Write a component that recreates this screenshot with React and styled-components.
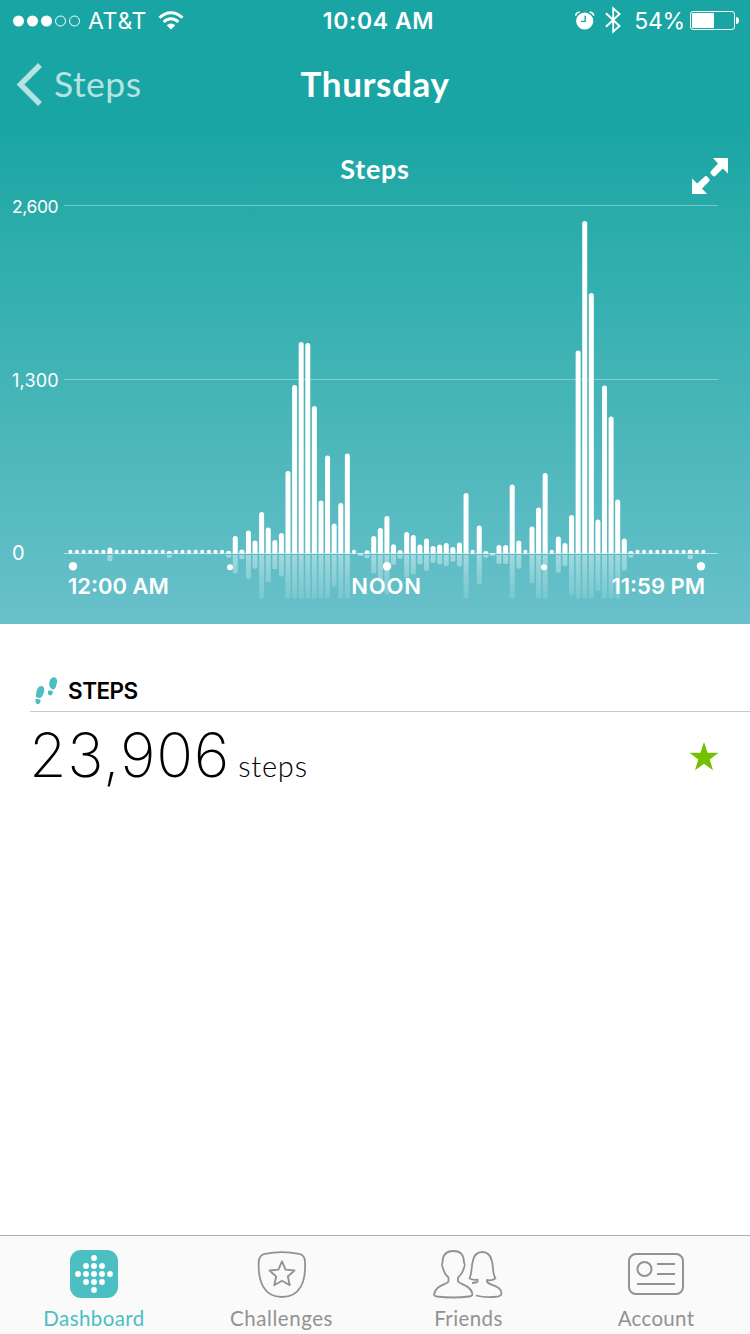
import React from 'react';
import styled, { createGlobalStyle } from 'styled-components';

const GlobalStyle = createGlobalStyle`
  *, *::before, *::after { box-sizing: border-box; }
  body { margin: 0; background: #fff; }
  svg { display: block; flex: none; }
`;

const Screen = styled.div`
  width: 750px;
  height: 1334px;
  display: flex;
  flex-direction: column;
  overflow: hidden;
  background: #fff;
  font-family: Lato, 'Open Sans', sans-serif;
`;

const Hero = styled.section`
  height: 624px;
  flex: none;
  color: #fff;
  background: linear-gradient(#19a5a3 0, #19a5a3 125px, #27aba9 205px, #4cb7bb 440px, #5abcc3 530px, #69c0ca 624px);
`;

const StatusBar = styled.div`
  height: 41px;
  display: grid;
  grid-template-columns: 1fr auto 1fr;
  align-items: center;
  padding: 0 11px 0 13px;
  font-family: Inter, sans-serif;
  font-size: 23px;
  line-height: 40px;
`;

const StatusGroup = styled.div`
  display: flex;
  align-items: center;
  justify-content: ${(p) => (p.$end ? 'flex-end' : 'flex-start')};
`;

const StatusText = styled.span`
  margin: ${(p) => p.$margin || 0};
  padding-top: 1px;
  font-weight: ${(p) => p.$weight || 400};
  letter-spacing: ${(p) => p.$spacing || 0}px;
  white-space: nowrap;
`;

const StatusIcon = styled.span`
  margin-right: ${(p) => p.$gap || 0}px;
  padding-bottom: ${(p) => p.$raise || 0}px;
`;

const NavBar = styled.header`
  height: 87px;
  display: grid;
  grid-template-columns: 1fr auto 1fr;
  align-items: center;
  padding: 0 16px;
`;

const BackLink = styled.a`
  display: flex;
  align-items: center;
  gap: 11px;
  color: #b5e3e1;
`;

const BackLabel = styled.span`
  padding-bottom: 2px;
  font-size: 35.5px;
  line-height: 40px;
  letter-spacing: 0.5px;
`;

const NavTitle = styled.h1`
  margin: 0;
  font-size: 35px;
  line-height: 40px;
  padding-bottom: 3px;
  font-weight: 700;
  letter-spacing: 0.6px;
`;

const ChartHeader = styled.div`
  height: 77px;
  display: grid;
  grid-template-columns: 1fr auto 1fr;
  padding: 25px 22px 0;
`;

const ChartTitle = styled.h2`
  margin: 0;
  font-size: 27px;
  line-height: 32px;
  font-weight: 700;
  letter-spacing: 0.7px;
`;

const ExpandButton = styled.div`
  justify-self: end;
  padding-top: 5px;
`;

const ChartBody = styled.div`
  display: flex;
  height: 363px;
`;

const AxisY = styled.div`
  width: 64px;
  height: 370px;
  padding-left: 12px;
  display: flex;
  flex-direction: column;
  justify-content: space-between;
  margin-top: -10px;
`;

const AxisLabel = styled.span`
  font-family: Inter, sans-serif;
  font-size: ${(p) => p.$size || 17.5}px;
  line-height: ${(p) => p.$line || 24}px;
  letter-spacing: ${(p) => p.$spacing || 0}px;
  height: 24px;
`;

const AxisX = styled.div`
  height: 36px;
  display: grid;
  grid-template-columns: 1fr auto 1fr;
  padding: 4px 45px 0 68px;
  font-size: 22px;
  line-height: 28px;
  font-weight: 600;
  font-family: Inter, sans-serif;
`;

const TimeLabel = styled.span`
  text-align: ${(p) => p.$align || 'left'};
  letter-spacing: ${(p) => p.$spacing || 0}px;
  white-space: nowrap;
`;

const Summary = styled.main`
  flex: 1;
  padding: 49px 0 0 30px;
`;

const SummaryHeader = styled.div`
  height: 39px;
  display: flex;
  align-items: center;
  padding: 0 0 3px 5px;
  border-bottom: 1px solid #c8c8c8;
`;

const SummaryTitle = styled.h3`
  margin: 0 0 0 10px;
  font-family: Inter, sans-serif;
  font-size: 22.5px;
  line-height: 30px;
  font-weight: 600;
  letter-spacing: -0.5px;
  color: #000;
`;

const SummaryRow = styled.div`
  height: 88px;
  display: flex;
  align-items: center;
  justify-content: space-between;
  padding-right: 31px;
`;

const Amount = styled.div`
  display: flex;
  align-items: baseline;
  padding-bottom: 3px;
  gap: 8px;
  color: #000;
`;

const AmountValue = styled.span`
  margin-left: -1px;
  font-family: Inter, sans-serif;
  font-size: 61px;
  font-weight: 250;
  line-height: 80px;
  letter-spacing: 0.7px;
`;

const AmountUnit = styled.span`
  font-size: 29px;
  font-weight: 300;
  letter-spacing: 0.8px;
`;

const TabBar = styled.nav`
  height: 99px;
  flex: none;
  display: grid;
  grid-template-columns: 188px 187px 187px 188px;
  background: #fafafa;
  border-top: 1px solid #adadad;
`;

const Tab = styled.a`
  display: flex;
  flex-direction: column;
  align-items: center;
  padding-top: 14px;
  color: ${(p) => (p.$active ? '#4bbfc1' : '#929292')};
`;

const TabIcon = styled.div`
  height: 51px;
  display: flex;
  align-items: flex-start;
`;

const TabLabel = styled.span`
  font-size: 20.5px;
  line-height: 34px;
  letter-spacing: ${(p) => p.$spacing || 0}px;
`;

const D = 'dot';
const N = 'none';
const BARS = [
  D, D, D, D, D, D, 547.5, D, D, D, D, D, D, D, D, 550.8, D, D, D, D, D, D, D, D,
  550.8, 536, 549.5, 530.5, 540.5, 512, 527.5, 540, 533, 471, 385, 342, 343, 406,
  500.5, 455.5, 523.5, 503, 453.5, D, N, 550.3, 536, 528, 516, 544.3, 550, 532, 535,
  544.5, 538.5, 546, 544.5, 543, 547, 542.5, 493, D, 525.5, 551, N, 545, 545, 484.5,
  540.5, D, 526.5, 507.5, 473, D, 536.5, 543, 515, 350.5, 221, 293, 519.5, 385.5,
  416.5, 499.5, 538.5, 551, D, D, D, D, D, D, D, D, 549.5, D, D,
];

function StepsChart() {
  return (
    <svg width="686" height="400" viewBox="64 205 686 400">
      <defs>
        <linearGradient id="fade" gradientUnits="userSpaceOnUse" x1="0" y1="555" x2="0" y2="599">
          <stop offset="0" stopColor="#fff" stopOpacity=".42" />
          <stop offset=".5" stopColor="#fff" stopOpacity=".26" />
          <stop offset="1" stopColor="#fff" stopOpacity=".13" />
        </linearGradient>
      </defs>
      {[205, 379, 553].map((y) => (
        <rect key={y} x="64" y={y} width="654" height="1" fill="#fff" fillOpacity={y === 553 ? 0.55 : 0.35} />
      ))}
      {BARS.map((top, i) => {
        const x = 70.4 + i * 6.594;
        if (top === D) return <circle key={i} cx={x} cy="551.8" r="2" fill="#fff" />;
        if (top === N) return <rect key={i} x={x - 2.6} y="553" width="5.2" height="2.6" fill="#fff" fillOpacity=".5" />;
        const bottom = Math.min(598.5, 555 + (553.5 - top) * 1.05);
        const r = Math.min(2.5, (553.4 - top) / 1.2);
        return (
          <g key={i}>
            <path d={`M${x - 2.5} 553.4V${top + r}q0-${r} 2.5-${r}t2.5 ${r}V553.4Z`} fill="#fff" />
            <path d={`M${x - 2.5} 555V${bottom - 1.5}q0 1.5 2.5 1.5t2.5-1.5V555Z`} fill="url(#fade)" />
          </g>
        );
      })}
      {[73, 230, 387, 544, 701].map((x, i) => (
        <circle key={x} cx={x} cy={i % 2 ? 567.2 : 566.2} r={i % 2 ? 3 : 4.2} fill="#fff" />
      ))}
    </svg>
  );
}

const Signal = () => (
  <svg width="68" height="12" viewBox="0 0 68 12" fill="#fff" stroke="#fff">
    {[5.5, 19.5, 33.5].map((x) => <circle key={x} cx={x} cy="6" r="5.5" stroke="none" />)}
    {[47.5, 61.5].map((x) => <circle key={x} cx={x} cy="6" r="5" fill="none" />)}
  </svg>
);

const Wifi = () => (
  <svg width="26" height="19" viewBox="0 0 26 19" fill="none" stroke="#fff" strokeWidth="3">
    <path d="M1.5 6.8C8-.1 18-.1 24.5 6.8M5.6 11C10 6.7 16 6.7 20.4 11" />
    <path d="M13 18.5 8.7 14.2Q13 10.6 17.3 14.2Z" fill="#fff" stroke="none" />
  </svg>
);

const Alarm = () => (
  <svg width="20" height="19" viewBox="0 0 20 19">
    <circle cx="9.7" cy="10" r="8.6" fill="#fff" />
    <path d="M.7 4.7Q1 1.5 4.7 1M14.7 1Q18.2 1.4 18.8 4.7" fill="none" stroke="#fff" strokeWidth="1.6" />
    <path d="M10.2 4.7V10.4H6" fill="none" stroke="#19a5a3" strokeWidth="1.4" />
  </svg>
);

const Bluetooth = () => (
  <svg width="17" height="28" viewBox="0 0 17 28" fill="none" stroke="#fff" strokeWidth="1.9">
    <path d="M1 7.2 14.5 20 8.2 25.7V2.3L14.5 8 1 20.8" />
  </svg>
);

const Battery = () => (
  <svg width="49" height="19" viewBox="0 0 49 19">
    <rect x=".5" y=".5" width="44" height="18" rx="2.6" fill="none" stroke="#fff" />
    <rect x="2" y="2" width="22" height="15" rx="1" fill="#fff" />
    <path d="M46 6q3 0 3 3.500t-3 3.500Z" fill="#fff" />
  </svg>
);

const Expand = () => (
  <svg width="36" height="37" viewBox="0 0 36 37" fill="#fff">
    <path d="M21 0H36V15.500L30.800 10.500 23 18.200Q21.500 19 20 17L18.600 15.500Q18 14 19 13L26 5.500Z" />
    <path d="M15 36H0V20.500L5.200 25.500 13 18.300Q14.500 17.500 16 19.500L17.400 21Q18 22.500 17 23.500L10 30.500Z" />
  </svg>
);

const Footprints = () => (
  <svg width="23" height="28" viewBox="0 0 23 28" fill="#4bbfc1">
    <path d="M14.300 5.500C14.700 2.300 16.700 0 19.300.300C22 .600 22.800 4 21.500 7.600C20.700 9.600 20.600 12.400 18.300 12.400C15.800 12.400 13.800 9 14.300 5.500Z" />
    <path d="M13 13.700Q16.500 13 18 14.500Q17.500 18.500 15 18.500Q12.200 17.800 13 13.700Z" />
    <path d="M1.500 15.300C1.600 11.800 4 8.800 6.600 9C9.400 9.400 9.900 13 8.700 16C7.600 18.300 6.900 20.700 4.900 21L1.200 20.300C.500 18.500 1.300 17 1.500 15.300Z" />
    <path d="M.400 22Q3.200 21.600 5.600 22.800Q5.500 27 2.900 27.200Q.100 27 .400 22Z" />
  </svg>
);

const Star = () => (
  <svg width="30" height="29" viewBox="0 0 30 29">
    <path d="M15 0 18.500 10.700H29.500L20.700 17.400 24 28.300 15 21.700 6 28.300 9.300 17.400.500 10.700H11.500Z" fill="#75bf00" />
  </svg>
);

const DASH_DOTS = [[24, 8], [16, 16], [24, 16], [32, 16], [8, 24], [16, 24], [24, 24], [32, 24], [40, 24], [16, 32], [24, 32], [32, 32], [24, 40]];
const DashboardIcon = () => (
  <svg width="48" height="48" viewBox="0 0 48 48">
    <rect width="48" height="48" rx="11" fill="#4bbfc1" />
    {DASH_DOTS.map(([x, y]) => <circle key={`${x}-${y}`} cx={x} cy={y} r="2.9" fill="#fff" />)}
  </svg>
);

const ChallengesIcon = () => (
  <svg width="49" height="49" viewBox="0 0 49 49" fill="none" stroke="#929292" strokeWidth="1.8" strokeLinejoin="round">
    <path d="M8 3.800Q25 .500 42 3.800Q48 5 48 12C49 31 43.500 47 25 47S1 31 1.700 12Q2 5 8 3.800Z" />
    <path d="M25 11.300 28.600 19.700 37.500 20.500 30.800 26.500 32.800 35.200 25 30.700 17.200 35.200 19.200 26.500 12.500 20.500 21.400 19.700Z" />
  </svg>
);

const FriendsIcon = () => (
  <svg width="71" height="49" viewBox="0 0 71 49" fill="none" stroke="#929292" strokeWidth="1.800" strokeLinejoin="round">
    <path d="M15.500 27.500V31.500C13 35 2.500 35 1 44.500Q1 46 4 46.500Q20 48.500 36 46.500Q40 46 39.300 43.500C37.500 35 28 35 25 31.500V27.500C28 25 30.500 20 31 17.500C31.800 16 32 13.500 31 12.800C31 5 27.500 1 20.500 1S9.500 5 9.500 12.800C8.800 14 9 16.500 9.800 17.500C10.500 21 13 25.500 15.500 27.500Z" />
    <path d="M39 33Q44 32.500 44.500 31.500V29.500Q41 30.500 36.500 28.500C39 23 38.500 16 39.500 12.500C40.500 5.500 43.500 2 49.300 2S58 5.500 59.300 12.500C60.300 17 59.500 24 62.500 28.500Q58.500 31 54 30V32C58 36 68 35.500 68.500 43.500Q68.500 45.500 65.500 46.300Q54 48.300 43 45.500" />
  </svg>
);

const AccountIcon = () => (
  <svg width="56" height="48" viewBox="0 0 56 48" fill="none" stroke="#929292" strokeWidth="2">
    <rect x="1" y="4" width="54" height="40" rx="7" />
    <circle cx="16.500" cy="19" r="7" />
    <path d="M29 14H47M29 24H47M9 34H47" />
  </svg>
);

const TABS = [
  { label: 'Dashboard', Icon: DashboardIcon, spacing: 0.4 },
  { label: 'Challenges', Icon: ChallengesIcon, spacing: 0.55 },
  { label: 'Friends', Icon: FriendsIcon, spacing: 0.4 },
  { label: 'Account', Icon: AccountIcon, spacing: 0.3 },
];

export default function App() {
  return (
    <Screen>
      <GlobalStyle />
      <Hero>
        <StatusBar>
          <StatusGroup>
            <Signal />
            <StatusText $margin="0 11px 0 7px" $spacing={0.7}>AT&amp;T</StatusText>
            <Wifi />
          </StatusGroup>
          <StatusText $weight={600} $spacing={0.6} $margin="0 0 0 5px">10:04 AM</StatusText>
          <StatusGroup $end>
            <StatusIcon $gap={10}><Alarm /></StatusIcon>
            <StatusIcon $raise={2}><Bluetooth /></StatusIcon>
            <StatusText $margin="0 5px 0 12px" $spacing={-0.2}>54%</StatusText>
            <Battery />
          </StatusGroup>
        </StatusBar>
        <NavBar>
          <BackLink>
            <svg width="27" height="43" viewBox="0 0 27 43" fill="none" stroke="#b5e3e1" strokeWidth="5.500">
              <path d="M24 2 4.500 21.500 24 41" />
            </svg>
            <BackLabel>Steps</BackLabel>
          </BackLink>
          <NavTitle>Thursday</NavTitle>
        </NavBar>
        <ChartHeader>
          <span />
          <ChartTitle>Steps</ChartTitle>
          <ExpandButton><Expand /></ExpandButton>
        </ChartHeader>
        <ChartBody>
          <AxisY>
            <AxisLabel $spacing={-0.4}>2,600</AxisLabel>
            <AxisLabel $size={18} $line={26} $spacing={0.2}>1,300</AxisLabel>
            <AxisLabel $size={20}>0</AxisLabel>
          </AxisY>
          <StepsChart />
        </ChartBody>
        <AxisX>
          <TimeLabel>12:00 AM</TimeLabel>
          <TimeLabel $spacing={0.8}>NOON</TimeLabel>
          <TimeLabel $align="right">11:59 PM</TimeLabel>
        </AxisX>
      </Hero>
      <Summary>
        <SummaryHeader>
          <Footprints />
          <SummaryTitle>STEPS</SummaryTitle>
        </SummaryHeader>
        <SummaryRow>
          <Amount>
            <AmountValue>23,906</AmountValue>
            <AmountUnit>steps</AmountUnit>
          </Amount>
          <Star />
        </SummaryRow>
      </Summary>
      <TabBar>
        {TABS.map(({ label, Icon, spacing }, i) => (
          <Tab key={label} $active={i === 0}>
            <TabIcon><Icon /></TabIcon>
            <TabLabel $spacing={spacing}>{label}</TabLabel>
          </Tab>
        ))}
      </TabBar>
    </Screen>
  );
}
